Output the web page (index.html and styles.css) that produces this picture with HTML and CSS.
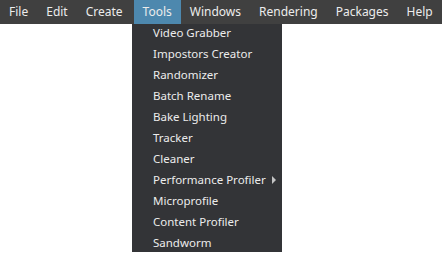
FILE: index.html
```html
<!DOCTYPE html>
<html lang="en">
<head>
    <meta charset="UTF-8">
    <title>Tools menu</title>
    <link rel="stylesheet" href="styles.css">
</head>
<body>
    <div class="menubar">
        <div class="menu-item">File</div>
        <div class="menu-item">Edit</div>
        <div class="menu-item">Create</div>
        <div class="menu-item open">Tools</div>
        <div class="menu-item">Windows</div>
        <div class="menu-item">Rendering</div>
        <div class="menu-item">Packages</div>
        <div class="menu-item">Help</div>
    </div>
    <ul class="tools-menu">
        <li>Video Grabber</li>
        <li>Impostors Creator</li>
        <li>Randomizer</li>
        <li>Batch Rename</li>
        <li>Bake Lighting</li>
        <li>Tracker</li>
        <li>Cleaner</li>
        <li class="sub">Performance Profiler <span class="arrow"></span></li>
        <li>Microprofile</li>
        <li>Content Profiler</li>
        <li>Sandworm</li>
    </ul>
</body>
</html>
```
FILE: styles.css
```css
body {
    margin: 0;
    background-color: #fff;
    font-family: "Noto Sans", "Open Sans", sans-serif;
    font-size: 12px;
    color: #ececec;
}
.menubar {
    display: flex;
    height: 24px;
    background-color: #404040;
}
.menu-item {
    padding: 0 9px;
    line-height: 23px;
}
.menu-item.open {
    margin-left: 2px;
    background-color: #4d88ae;
}
.tools-menu {
    width: 150px;
    height: 228px;
    margin: 0 0 0 132px;
    padding: 0;
    list-style: none;
    background-color: #333437;
    font-size: 11.5px;
}
.tools-menu li {
    box-sizing: border-box;
    display: flex;
    align-items: center;
    height: 21px;
    padding: 0 6px 4px 21px;
}
.arrow {
    margin-left: auto;
    width: 0;
    height: 0;
    border-top: 4px solid transparent;
    border-bottom: 4px solid transparent;
    border-left: 4px solid #c4c4c4;
}
```
